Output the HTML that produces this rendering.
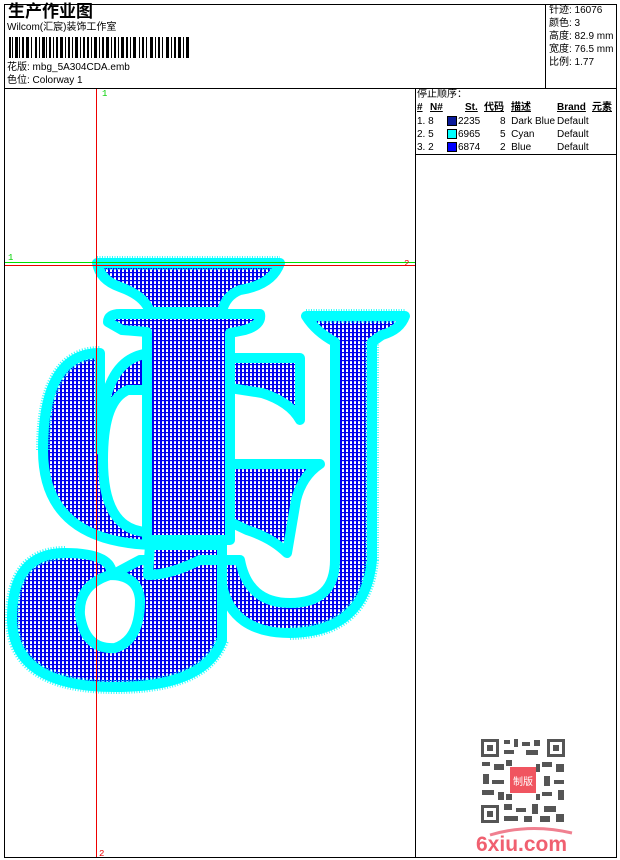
<!DOCTYPE html>
<html><head><meta charset="utf-8"><style>
*{margin:0;padding:0}
body{width:620px;height:860px;background:#fff;position:relative;overflow:hidden;font-family:"Liberation Sans","Noto Sans CJK SC",sans-serif;font-size:10px;color:#000}
.a{position:absolute;white-space:nowrap;line-height:12px}
.ln{position:absolute;background:#000}
.b{font-weight:bold;text-decoration:underline}
.sw{position:absolute;width:10px;height:10px;border:1px solid #000;box-sizing:border-box}
</style></head><body>
<div class="ln" style="left:4px;top:4px;width:613px;height:1px"></div>
<div class="ln" style="left:4px;top:857px;width:613px;height:1px"></div>
<div class="ln" style="left:4px;top:4px;width:1px;height:854px"></div>
<div class="ln" style="left:616px;top:4px;width:1px;height:854px"></div>
<div class="ln" style="left:4px;top:88px;width:613px;height:1px"></div>
<div class="ln" style="left:545px;top:4px;width:1px;height:84px"></div>
<div class="ln" style="left:415px;top:88px;width:1px;height:770px"></div>
<div class="ln" style="left:415px;top:154px;width:202px;height:1px"></div>

<div class="a" style="left:8px;top:3px;font-size:17px;font-weight:bold;line-height:18px">生产作业图</div>
<div class="a" style="left:7px;top:22px">Wilcom(汇宸)装饰工作室</div>
<svg style="position:absolute;left:9px;top:37px" width="182" height="21">
<g fill="#000">
<rect x="0" width="2" height="21"/><rect x="3" width="1" height="21"/><rect x="6" width="3" height="21"/><rect x="10" width="1" height="21"/><rect x="13" width="2" height="21"/><rect x="17" width="3" height="21"/><rect x="22" width="1" height="21"/><rect x="26" width="2" height="21"/><rect x="30" width="1" height="21"/><rect x="33" width="3" height="21"/><rect x="37" width="1" height="21"/><rect x="40" width="2" height="21"/><rect x="44" width="1" height="21"/><rect x="47" width="2" height="21"/><rect x="51" width="3" height="21"/><rect x="56" width="1" height="21"/><rect x="59" width="2" height="21"/><rect x="63" width="1" height="21"/><rect x="66" width="3" height="21"/><rect x="71" width="1" height="21"/><rect x="74" width="2" height="21"/><rect x="78" width="2" height="21"/><rect x="82" width="1" height="21"/><rect x="85" width="3" height="21"/><rect x="90" width="1" height="21"/><rect x="93" width="2" height="21"/><rect x="97" width="3" height="21"/><rect x="102" width="1" height="21"/><rect x="105" width="2" height="21"/><rect x="109" width="1" height="21"/><rect x="112" width="3" height="21"/><rect x="117" width="2" height="21"/><rect x="121" width="1" height="21"/><rect x="124" width="3" height="21"/><rect x="130" width="1" height="21"/><rect x="133" width="2" height="21"/><rect x="137" width="1" height="21"/><rect x="141" width="3" height="21"/><rect x="146" width="1" height="21"/><rect x="149" width="2" height="21"/><rect x="153" width="1" height="21"/><rect x="157" width="3" height="21"/><rect x="162" width="1" height="21"/><rect x="165" width="2" height="21"/><rect x="169" width="3" height="21"/><rect x="174" width="1" height="21"/><rect x="177" width="3" height="21"/>
</g></svg>
<div class="a" style="left:7px;top:62px">花版: mbg_5A304CDA.emb</div>
<div class="a" style="left:7px;top:75px">色位: Colorway 1</div>

<div class="a" style="left:549px;top:5px">针迹: 16076</div>
<div class="a" style="left:549px;top:18px">颜色: 3</div>
<div class="a" style="left:549px;top:31px">高度: 82.9 mm</div>
<div class="a" style="left:549px;top:44px">宽度: 76.5 mm</div>
<div class="a" style="left:549px;top:57px">比例: 1.77</div>

<div class="a" style="left:417px;top:89px">停止顺序：</div>
<div class="a b" style="left:417px;top:102px">#</div>
<div class="a b" style="left:430px;top:102px">N#</div>
<div class="a b" style="left:465px;top:102px">St.</div>
<div class="a b" style="left:484px;top:102px">代码</div>
<div class="a b" style="left:511px;top:102px">描述</div>
<div class="a b" style="left:557px;top:102px">Brand</div>
<div class="a b" style="left:592px;top:102px">元素</div>
<div class="a" style="left:417px;top:116px">1. 8</div><div class="sw" style="left:447px;top:116px;background:#0a1a9a"></div><div class="a" style="left:458px;top:116px">2235</div><div class="a" style="left:500px;top:116px">8&nbsp; Dark Blue</div><div class="a" style="left:557px;top:116px">Default</div>
<div class="a" style="left:417px;top:129px">2. 5</div><div class="sw" style="left:447px;top:129px;background:#00ffff"></div><div class="a" style="left:458px;top:129px">6965</div><div class="a" style="left:500px;top:129px">5&nbsp; Cyan</div><div class="a" style="left:557px;top:129px">Default</div>
<div class="a" style="left:417px;top:142px">3. 2</div><div class="sw" style="left:447px;top:142px;background:#0000ff"></div><div class="a" style="left:458px;top:142px">6874</div><div class="a" style="left:500px;top:142px">2&nbsp; Blue</div><div class="a" style="left:557px;top:142px">Default</div>

<svg style="position:absolute;left:0;top:0" width="416" height="860">
<defs><pattern id="h" width="4" height="4" patternUnits="userSpaceOnUse">
<rect width="4" height="4" fill="#fff"/><rect x="0" width="2" height="4" fill="#0000f0"/><rect y="0" width="4" height="1.2" fill="#0000f0"/></pattern></defs>
<g fill="url(#h)" stroke="#00ffff" stroke-width="10" stroke-linejoin="round">
<path fill-rule="evenodd" d="M100,450 Q100,353 155,353 L160,545 Q43,545 43,450 Q43,353 100,353 Z M128,390 Q103,400 103,460 Q103,530 147,532 L147,390 Z"/>
<path fill-rule="evenodd" d="M12,618 Q12,553 65,553 Q112,553 112,575 L140,560 L222,560 L222,640 Q205,687 115,687 Q12,687 12,618 Z M110,575 Q78,585 80,615 Q85,650 115,648 Q140,640 140,600 Q138,575 110,575 Z"/>
<path d="M150,545 L222,545 L222,560 L200,560 Q170,575 148,575 Z"/>
<path d="M97,263 L280,263 Q272,285 240,290 Q225,296 222,312 L150,312 Q145,296 120,287 Q100,280 97,263 Z"/>
<path d="M108,322 Q108,314 120,314 L260,314 Q262,325 245,330 L230,333 L230,540 L147,540 L147,332 L122,330 Z"/>
<path d="M230,358 L300,358 L300,420 Q290,402 262,393 L230,388 Z"/>
<path d="M230,464 L320,464 Q302,476 296,500 L287,553 Q272,538 247,530 L230,522 Z"/>
<path d="M306,316 L405,316 Q400,330 382,335 L372,342 L372,560 Q365,632 290,633 Q232,633 222,585 L222,560 L240,560 Q248,603 290,603 Q335,603 335,560 L335,342 Q316,332 306,316 Z"/>
</g>
<g fill="none" stroke="#00ffff" stroke-width="14" stroke-dasharray="1 1.5" opacity="0.8">
<path d="M97,263 L280,263"/><path d="M306,316 L405,316"/><path d="M372,342 L372,560 Q365,632 290,633"/><path d="M12,618 Q12,553 65,553"/><path d="M43,450 Q43,353 100,353"/><path d="M222,640 Q205,687 115,687 Q12,687 12,618"/>
</g>
<rect x="5" y="262" width="410" height="1" fill="#00e000"/>
<rect x="5" y="265" width="410" height="1" fill="#e00"/>
<rect x="96" y="89" width="1" height="768" fill="#e00"/>
<text x="102" y="96" font-size="9" fill="#00d000" font-family="Liberation Mono">1</text>
<text x="8" y="260" font-size="9" fill="#00d000" font-family="Liberation Mono">1</text>
<text x="404" y="266" font-size="9" fill="#e00" font-family="Liberation Mono">2</text>
<text x="99" y="856" font-size="9" fill="#e00" font-family="Liberation Mono">2</text>
</svg>

<svg style="position:absolute;left:480px;top:738px" width="86" height="86">
<g fill="#555">
<rect x="1" y="1" width="18" height="18"/><rect x="67" y="1" width="18" height="18"/><rect x="1" y="67" width="18" height="18"/>
</g><g fill="#fff"><rect x="4" y="4" width="12" height="12"/><rect x="70" y="4" width="12" height="12"/><rect x="4" y="70" width="12" height="12"/></g>
<g fill="#555"><rect x="7" y="7" width="6" height="6"/><rect x="73" y="7" width="6" height="6"/><rect x="7" y="73" width="6" height="6"/>
<rect x="24" y="2" width="6" height="4"/><rect x="34" y="1" width="4" height="8"/><rect x="42" y="4" width="8" height="4"/><rect x="54" y="2" width="6" height="6"/><rect x="24" y="12" width="10" height="4"/><rect x="46" y="12" width="12" height="5"/><rect x="2" y="24" width="8" height="4"/><rect x="14" y="26" width="10" height="6"/><rect x="62" y="24" width="10" height="5"/><rect x="76" y="26" width="8" height="8"/><rect x="3" y="36" width="6" height="10"/><rect x="12" y="42" width="12" height="4"/><rect x="64" y="38" width="6" height="10"/><rect x="74" y="42" width="10" height="4"/><rect x="2" y="52" width="12" height="5"/><rect x="18" y="54" width="6" height="8"/><rect x="62" y="54" width="10" height="4"/><rect x="78" y="52" width="6" height="10"/><rect x="24" y="66" width="8" height="6"/><rect x="36" y="70" width="10" height="4"/><rect x="52" y="66" width="6" height="10"/><rect x="64" y="68" width="12" height="6"/><rect x="24" y="78" width="14" height="5"/><rect x="44" y="78" width="8" height="6"/><rect x="60" y="78" width="10" height="6"/><rect x="76" y="76" width="8" height="8"/><rect x="26" y="22" width="6" height="6"/><rect x="56" y="26" width="4" height="8"/><rect x="26" y="56" width="6" height="6"/><rect x="56" y="56" width="4" height="6"/></g>
<rect x="30" y="29" width="26" height="26" fill="#f05560"/>
<text x="43" y="47" font-size="10" fill="#fff" text-anchor="middle" font-family="Noto Sans CJK SC">制版</text>
</svg>
<svg style="position:absolute;left:470px;top:825px" width="110" height="30">
<path d="M20,10 Q60,-2 102,8" stroke="#f08090" stroke-width="3" fill="none"/>
<text x="6" y="26" font-size="21" font-weight="bold" fill="#f06070" font-family="Liberation Sans">6xiu.com</text>
</svg>
</body></html>
